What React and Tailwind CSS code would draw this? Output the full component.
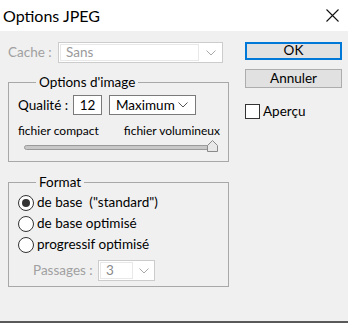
import React from "react";

const Chevron = ({ color = "#7a7a7a" }) => (
  <svg width="10" height="6" viewBox="0 0 10 6" fill="none">
    <path d="M0.5 0.5 L5 5 L9.5 0.5" stroke={color} strokeWidth="1" />
  </svg>
);

const Radio = ({ checked, label }) => (
  <div className="flex items-center h-[21px]">
    <span className="w-[16px] h-[16px] rounded-full border border-[#333] bg-white flex items-center justify-center">
      {checked && <span className="w-[8px] h-[8px] rounded-full bg-[#333]" />}
    </span>
    <span className="ml-[3px] whitespace-pre">{label}</span>
  </div>
);

export default function App() {
  return (
    <div
      className="w-[348px] h-[323px] bg-[#f0f0f0] text-[13.5px] text-black overflow-hidden flex flex-col"
      style={{ fontFamily: 'Lato, "Open Sans", sans-serif' }}
    >
      {/* title bar */}
      <div className="h-[31px] bg-white flex items-center justify-between pl-[3px] pr-[9px] shrink-0">
        <span className="text-[16px] leading-none">Options JPEG</span>
        <svg width="13" height="13" viewBox="0 0 13 13">
          <path d="M0.5 0.5 L12.5 12.5 M12.5 0.5 L0.5 12.5" stroke="#111" strokeWidth="1.1" />
        </svg>
      </div>

      <div className="flex flex-1 pl-[8px] pt-[11px]">
        {/* left column */}
        <div className="w-[221px] flex flex-col">
          <div className="flex items-center h-[21px]">
            <span className="text-[#a0a0a0] w-[50px]">Cache :</span>
            <div className="w-[165px] h-[21px] border border-[#cccccc] bg-white flex items-stretch">
              <div className="flex-1 border border-[#e8e8e8] m-[1px] flex items-center pl-[5px] text-[#9a9a9a]">Sans</div>
              <div className="w-[22px] flex items-center justify-center">
                <Chevron color="#a8a8a8" />
              </div>
            </div>
          </div>

          <fieldset className="mt-[11px] border border-[#a8a8a8] h-[88px] pl-[9px]">
            <legend className="ml-[18px] px-[3px] leading-[16px]">Options d'image</legend>
            <div className="flex items-center mt-[5px]">
              <span className="w-[55px]">Qualité :</span>
              <div className="w-[29px] h-[20px] border border-[#7a7a7a] bg-white flex items-center justify-center">12</div>
              <div className="ml-[7px] w-[87px] h-[20px] border border-[#7a7a7a] bg-white flex items-center justify-between pl-[6px] pr-[7px]">
                <span>Maximum</span>
                <Chevron color="#555" />
              </div>
            </div>
            <div className="flex justify-between pr-[8px] mt-[8px] text-[12px] leading-[16px]">
              <span>fichier compact</span>
              <span>fichier volumineux</span>
            </div>
            <div className="relative ml-[6px] w-[192px] h-[12px] mt-[1px]">
              <div className="absolute left-0 right-0 top-[5px] h-[5px] rounded-full border border-[#9a9a9a] bg-[#c8c8c8]" />
              <svg className="absolute right-[-2px] top-0" width="11" height="12" viewBox="0 0 11 12">
                <path d="M5.5 0.5 L10.5 5.5 L10.5 11.5 L0.5 11.5 L0.5 5.5 Z" fill="#e8e8e8" stroke="#8a8a8a" />
              </svg>
            </div>
          </fieldset>

          <fieldset className="mt-[12px] border border-[#a8a8a8] h-[113px] pl-[9px]">
            <legend className="ml-[18px] px-[3px] leading-[16px]">Format</legend>
            <div className="mt-[2px]">
              <Radio checked label={'de base  ("standard")'} />
              <Radio label="de base optimisé" />
              <Radio label="progressif optimisé" />
            </div>
            <div className="flex items-center mt-[5px] pl-[15px]">
              <span className="text-[#a0a0a0] w-[65px]">Passages :</span>
              <div className="w-[57px] h-[21px] border border-[#cccccc] bg-white flex items-stretch">
                <div className="w-[33px] border border-[#e8e8e8] m-[1px] flex items-center pl-[5px] text-[#8a8a8a]">3</div>
                <div className="flex-1 flex items-center justify-center">
                  <Chevron color="#a8a8a8" />
                </div>
              </div>
            </div>
          </fieldset>
        </div>

        {/* right column */}
        <div className="ml-[16px] w-[97px] flex flex-col">
          <button className="h-[18px] border-2 border-[#0078d7] bg-[#e1e1e1] flex items-center justify-center leading-none">OK</button>
          <button className="mt-[9px] h-[19px] border border-[#adadad] bg-[#e1e1e1] flex items-center justify-center leading-none">Annuler</button>
          <div className="mt-[13px] flex items-center">
            <span className="w-[15px] h-[15px] border border-[#333] bg-white" />
            <span className="ml-[3px]">Aperçu</span>
          </div>
        </div>
      </div>

      <div className="h-[2px] bg-[#5a5a5a] shrink-0" />
    </div>
  );
}
